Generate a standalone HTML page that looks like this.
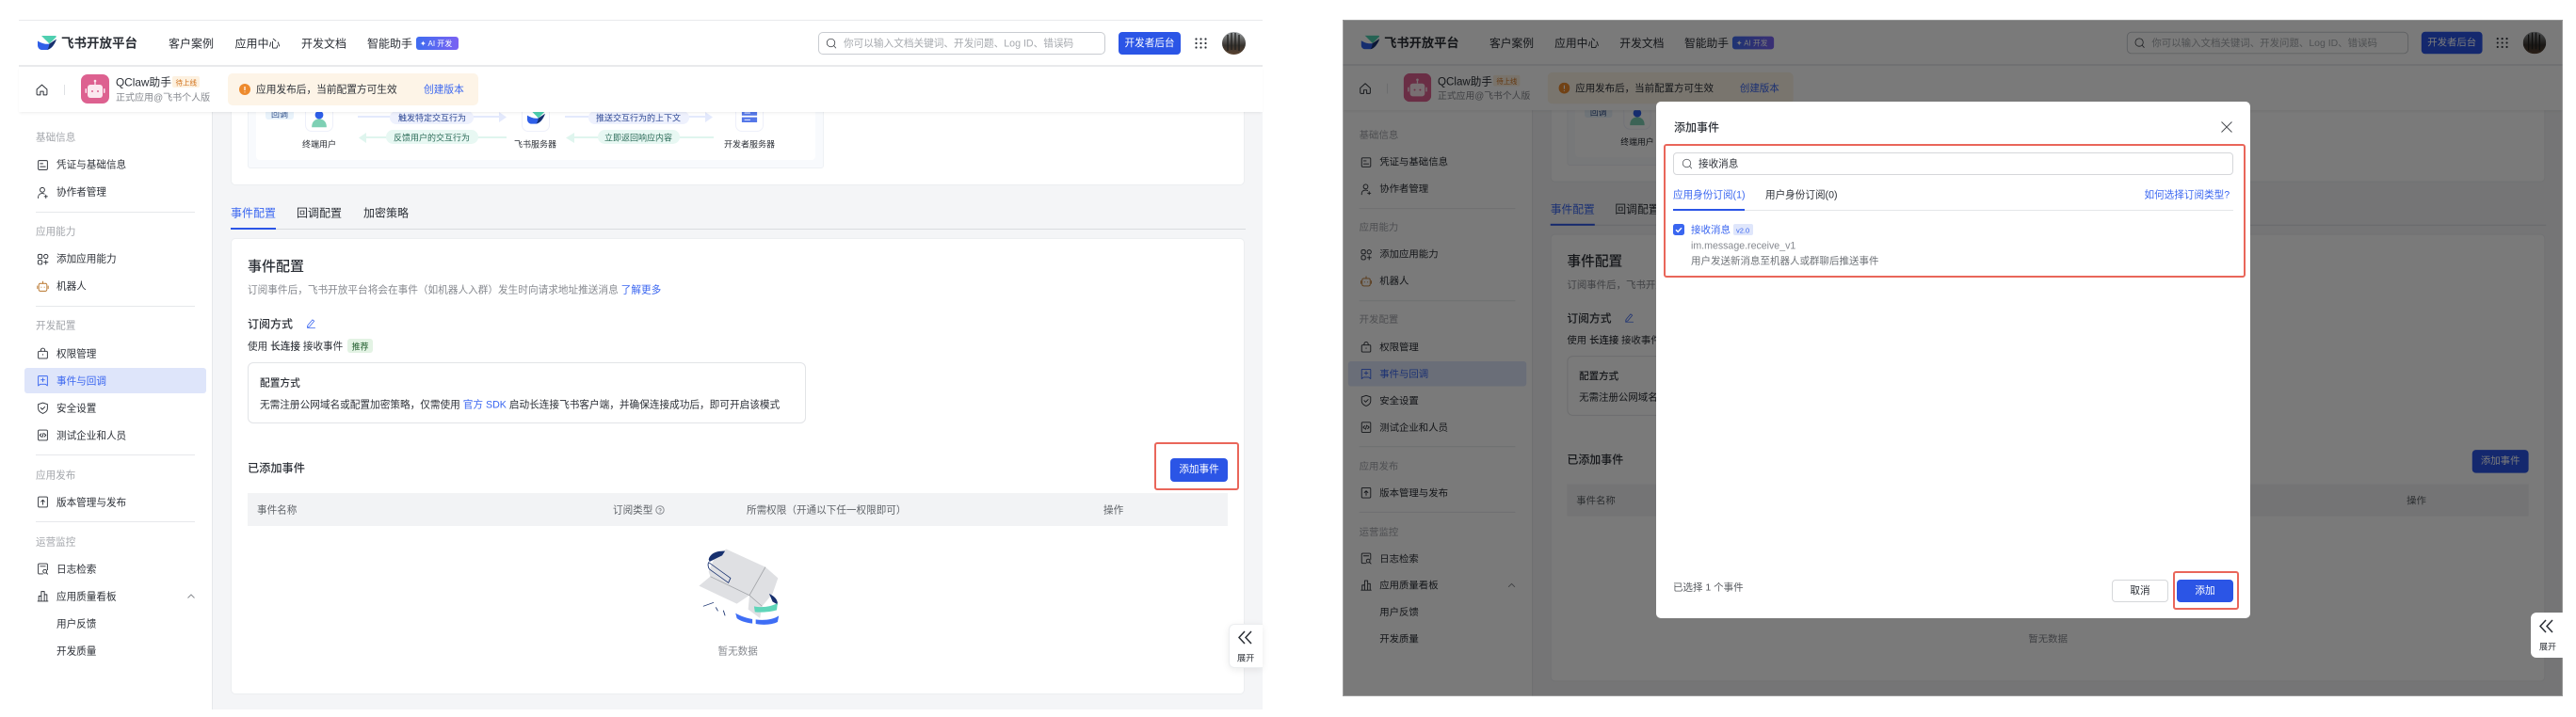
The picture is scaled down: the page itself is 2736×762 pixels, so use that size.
<!DOCTYPE html>
<html lang="zh-CN">
<head>
<meta charset="utf-8">
<title>飞书开放平台 事件配置</title>
<style>
html,body{margin:0;padding:0;width:2736px;height:762px;overflow:hidden;background:#fff}
body{position:relative;font-family:"Liberation Sans","Noto Sans CJK SC",sans-serif;color:#2b2f36;filter:blur(.35px)}
.p{position:absolute;left:0;top:0;width:1400px;height:762px;overflow:hidden}
.r{transform-origin:0 0;transform:translate(1406.38px,.4px) scale(.981)}
.b{position:absolute;box-sizing:border-box}
.t{position:absolute;white-space:nowrap;line-height:1.2;transform:translateY(calc(-50% + .8px));font-size:10.6px}
.g{color:#a3a6ab}
.h{color:#86898f}
.bl{color:#3a66f0}
.ic{position:absolute;width:13px;height:13px;fill:none;stroke:#2b2f36;stroke-width:1.7;stroke-linecap:round;stroke-linejoin:round}
.dv{position:absolute;left:38px;width:169px;height:1px;background:#e6e8eb}
.red{position:absolute;box-sizing:border-box;border:2px solid #e9665a;border-radius:3px}
.btn{position:absolute;background:#2b55e6;color:#fff;border-radius:4px;font-size:10.6px;text-align:center;box-sizing:border-box}
</style>
</head>
<body>
<svg width="0" height="0" style="position:absolute">
<defs>
<symbol id="doc" viewBox="0 0 24 24"><rect x="3" y="3" width="18" height="18" rx="2"/><path d="M7 9h5M7 15h10"/></symbol>
<symbol id="usr" viewBox="0 0 24 24"><circle cx="11" cy="7" r="4.5"/><path d="M3 23v-2c0-4 3-7 8-7 2 0 3 .4 4 1M18 17v6M15 20h6"/></symbol>
<symbol id="app" viewBox="0 0 24 24"><rect x="2.5" y="2.5" width="8" height="8" rx="2.5"/><rect x="14" y="2.5" width="8" height="8" rx="4"/><rect x="2.5" y="14" width="8" height="8" rx="2.5"/><path d="M18 14v8M14 18h8"/></symbol>
<symbol id="bot" viewBox="0 0 24 24"><rect x="4" y="6" width="16" height="15" rx="3"/><path d="M12 2v4M1.5 11v5M22.5 11v5M9 13v.5M15 13v.5"/></symbol>
<symbol id="bag" viewBox="0 0 24 24"><rect x="3" y="8" width="18" height="14" rx="2"/><path d="M8 8V6a4 4 0 0 1 8 0v2M12 14v1"/></symbol>
<symbol id="evt" viewBox="0 0 24 24"><path d="M4 3h16a1 1 0 0 1 1 1v18l-4-3H7l-4 3V4a1 1 0 0 1 1-1zM12 7v7M8.5 10.500h7"/></symbol>
<symbol id="shd" viewBox="0 0 24 24"><path d="M12 2l9 3v8c0 5-4 8-9 10-5-2-9-5-9-10V5zM8 12l3 3 5-5"/></symbol>
<symbol id="cod" viewBox="0 0 24 24"><rect x="3" y="2" width="18" height="20" rx="2"/><path d="M9 9l-3 3 3 3M15 9l3 3-3 3M13 8l-2 8"/></symbol>
<symbol id="upl" viewBox="0 0 24 24"><rect x="3" y="2" width="18" height="20" rx="2"/><path d="M12 17V8M8.500 11.500L12 8l3.500 3.500"/></symbol>
<symbol id="log" viewBox="0 0 24 24"><path d="M12 22H5a2 2 0 0 1-2-2V4a2 2 0 0 1 2-2h14a2 2 0 0 1 2 2v10M7 7h10"/><circle cx="16" cy="17" r="3.500"/><path d="M19 20l2.500 2.500"/></symbol>
<symbol id="bar" viewBox="0 0 24 24"><path d="M2 22h20M4 22V12h5v10M9 22V3h6v19M15 22V9h5v13"/></symbol>
<symbol id="pen" viewBox="0 0 24 24"><path d="M4 17L15 4l4 3L8 20l-5 1zM3 23h18"/></symbol>
<symbol id="sch" viewBox="0 0 24 24"><circle cx="11" cy="11" r="8.500"/><path d="M17 17l4.500 5"/></symbol>
<symbol id="hom" viewBox="0 0 24 24"><path d="M2 11L12 2l10 9v9a2 2 0 0 1-2 2h-5v-7H9v7H4a2 2 0 0 1-2-2z"/></symbol>
<symbol id="lgo" viewBox="0 0 40 30"><path d="M8 0H38C40 1 40 2 39 3L25 17C19 11 13 5 8 0Z" fill="#4fcfb0"/><path d="M0 11C7 15 15 19 25 17L33 21C29 26 25 29 20 30H8C3 29 0 25 0 20Z" fill="#2f5fe8"/><path d="M25 17L40 7C38 14 34 20 30 24 27 27 23 29 20 30 23 27 24 22 25 17Z" fill="#17306e"/></symbol>
<symbol id="rbt" viewBox="0 0 30 31"><rect width="30" height="31" rx="7" fill="#dd6190"/><rect x="7" y="11" width="16" height="14" rx="3" fill="#fbe8ef"/><path d="M15 7v4" stroke="#fbe8ef" stroke-width="1.300"/><circle cx="15" cy="7" r="1.300" fill="#fbe8ef"/><rect x="4.500" y="15" width="1.500" height="5" rx=".7" fill="#fbe8ef"/><rect x="24" y="15" width="1.500" height="5" rx=".7" fill="#fbe8ef"/><circle cx="12" cy="18" r="1" fill="#dd6190"/><circle cx="18" cy="18" r="1" fill="#dd6190"/></symbol>
<symbol id="ava" viewBox="0 0 25 24"><defs><linearGradient id="avg" x1="0" y1="0" x2="0" y2="1"><stop offset="0" stop-color="#9ba0a3"/><stop offset=".6" stop-color="#38332e"/><stop offset="1" stop-color="#5a4331"/></linearGradient></defs><ellipse cx="12.500" cy="12" rx="12.500" ry="12" fill="url(#avg)"/><path d="M6 3v17M10 1v18M14 1v18M18 3v17" stroke="#20201f" stroke-width="1.300"/></symbol>
<symbol id="dts" viewBox="0 0 13 12"><g fill="#2b2f36"><circle cx="1.500" cy="1.500" r="1.100"/><circle cx="6.500" cy="1.500" r="1.100"/><circle cx="11.500" cy="1.500" r="1.100"/><circle cx="1.500" cy="6" r="1.100"/><circle cx="6.500" cy="6" r="1.100"/><circle cx="11.500" cy="6" r="1.100"/><circle cx="1.500" cy="10.500" r="1.100"/><circle cx="6.500" cy="10.500" r="1.100"/><circle cx="11.500" cy="10.500" r="1.100"/></g></symbol>
<symbol id="prs" viewBox="0 0 20 24"><circle cx="10" cy="7" r="5" fill="#2f5fe8"/><path d="M1 22c0-7 4-10 9-10s9 3 9 10z" fill="#7ed0b4"/></symbol>
<symbol id="srv" viewBox="0 0 20 24"><rect x="1" y="1" width="18" height="5" fill="#7ed0b4"/><rect x="1" y="8" width="18" height="6" fill="#5577e8"/><rect x="1" y="16" width="18" height="6" fill="#5577e8"/><path d="M4 11h7M4 19h7" stroke="#fff"/></symbol>
</defs>
</svg>

<!-- LEFT PAGE -->
<div class="p">
<div class="b" style="left:20px;top:21px;width:1321px;height:733px;background:#f4f5f7"></div>
<!-- card 1 -->
<div class="b" style="left:245px;top:100px;width:1077px;height:97px;background:#fff;border:1px solid #eceef0;border-radius:5px"></div>
<div class="b" style="left:263px;top:100px;width:612px;height:79px;background:#f8fafd;border:1px solid #eef1f5;border-radius:3px"></div>
<div class="b" style="left:272px;top:100px;width:594px;height:70px;background:#fff;border-radius:4px"></div>
<div class="b" style="left:282px;top:115px;width:30px;height:12px;background:#e9f3fb;border-radius:3px"></div>
<span class="t" style="left:288px;top:121px;font-size:9px;color:#2f4f8a">回调</span>
<div class="b" style="left:324px;top:100px;width:30px;height:40px;background:#fff;border:1px solid #eef0fa;border-radius:7px"></div>
<svg style="position:absolute;left:329px;top:116px;width:20px;height:21px"><use href="#prs"/></svg>
<span class="t" style="left:321px;top:153px;font-size:9px">终端用户</span>
<div class="b" style="left:380px;top:123px;width:150px;height:2px;background:#e3e9fc"></div>
<svg style="position:absolute;left:530px;top:119px;width:8px;height:11px"><path d="M0 0l8 5.500-8 5.500z" fill="#e3e9fc"/></svg>
<div class="b" style="left:414px;top:118px;width:89px;height:14px;background:#eef1fd;border-radius:7px"></div>
<span class="t" style="left:423px;top:124.500px;font-size:9px;color:#2b4593">触发特定交互行为</span>
<div class="b" style="left:389px;top:145px;width:149px;height:2px;background:#dff5ee"></div>
<svg style="position:absolute;left:381px;top:140.500px;width:8px;height:11px"><path d="M8 0L0 5.500 8 11z" fill="#dff5ee"/></svg>
<div class="b" style="left:410px;top:138px;width:98px;height:15px;background:#e8f8f3;border-radius:8px"></div>
<span class="t" style="left:418px;top:145.500px;font-size:9px;color:#2b6b58">反馈用户的交互行为</span>
<div class="b" style="left:554px;top:100px;width:30px;height:40px;background:#fff;border:1px solid #eef0fa;border-radius:7px"></div>
<svg style="position:absolute;left:560px;top:117px;width:19px;height:15px"><use href="#lgo"/></svg>
<span class="t" style="left:546px;top:153px;font-size:9px">飞书服务器</span>
<div class="b" style="left:600px;top:123px;width:149px;height:2px;background:#e3e9fc"></div>
<svg style="position:absolute;left:749px;top:119px;width:8px;height:11px"><path d="M0 0l8 5.500-8 5.500z" fill="#e3e9fc"/></svg>
<div class="b" style="left:625px;top:118px;width:107px;height:14px;background:#eef1fd;border-radius:7px"></div>
<span class="t" style="left:633px;top:124.500px;font-size:9px;color:#2b4593">推送交互行为的上下文</span>
<div class="b" style="left:610px;top:145px;width:148px;height:2px;background:#dff5ee"></div>
<svg style="position:absolute;left:601px;top:140.500px;width:9px;height:11px"><path d="M9 0L0 5.500 9 11z" fill="#dff5ee"/></svg>
<div class="b" style="left:635px;top:138px;width:87px;height:15px;background:#e8f8f3;border-radius:8px"></div>
<span class="t" style="left:642px;top:145.500px;font-size:9px;color:#2b6b58">立即返回响应内容</span>
<div class="b" style="left:781px;top:100px;width:30px;height:40px;background:#fff;border:1px solid #eef0fa;border-radius:7px"></div>
<svg style="position:absolute;left:787px;top:110px;width:18px;height:22px"><use href="#srv"/></svg>
<span class="t" style="left:769px;top:153px;font-size:9px">开发者服务器</span>
<!-- tabs -->
<div class="b" style="left:245px;top:243px;width:1078px;height:1px;background:#d9dce0"></div>
<div class="b" style="left:245px;top:242px;width:48px;height:2px;background:#2b55e6"></div>
<span class="t" style="left:245px;top:225.500px;font-size:12px;color:#3a66f0">事件配置</span>
<span class="t" style="left:315px;top:225.500px;font-size:12px">回调配置</span>
<span class="t" style="left:386px;top:225.500px;font-size:12px">加密策略</span>
<!-- card 2 -->
<div class="b" style="left:245px;top:253px;width:1077px;height:485px;background:#fff;border:1px solid #eceef0;border-radius:5px"></div>
<span class="t" style="left:263px;top:283px;font-size:15px;font-weight:500">事件配置</span>
<span class="t h" style="left:263px;top:308px;font-size:10.650px">订阅事件后，飞书开放平台将会在事件（如机器人入群）发生时向请求地址推送消息 <span class="bl">了解更多</span></span>
<span class="t" style="left:263px;top:344px;font-size:12px;font-weight:500">订阅方式</span>
<svg class="ic" style="left:325px;top:338px;width:11px;height:11px;stroke:#3a66f0"><use href="#pen"/></svg>
<span class="t" style="left:263px;top:368px;font-size:10.600px">使用 <b style="font-weight:500">长连接</b> 接收事件</span>
<div class="b" style="left:369px;top:360px;width:27px;height:15px;background:#e3f3e4;border-radius:3px"></div>
<span class="t" style="left:373.500px;top:367.500px;font-size:9px;color:#1d5a2a">推荐</span>
<div class="b" style="left:263px;top:385px;width:593px;height:65px;border:1px solid #e2e4e7;border-radius:6px;background:#fff"></div>
<span class="t" style="left:276px;top:407px;font-size:10.700px;font-weight:500">配置方式</span>
<span class="t" style="left:276px;top:430px;font-size:10.650px">无需注册公网域名或配置加密策略，仅需使用 <span class="bl">官方 SDK</span> 启动长连接飞书客户端，并确保连接成功后，即可开启该模式</span>
<span class="t" style="left:263px;top:497px;font-size:12.200px;font-weight:500">已添加事件</span>
<div class="btn" style="left:1243px;top:487px;width:61px;height:25px;line-height:25px">添加事件</div>
<div class="red" style="left:1226px;top:470px;width:90px;height:51px"></div>
<div class="b" style="left:263px;top:524px;width:1041px;height:35px;background:#f2f3f5"></div>
<span class="t" style="left:273px;top:542px;color:#5f6368">事件名称</span>
<span class="t" style="left:651px;top:542px;color:#5f6368">订阅类型</span>
<svg class="ic" style="left:696px;top:537px;width:10px;height:10px;stroke:#8a8d92"><circle cx="5" cy="5" r="4.200" stroke-width="1"/><path d="M5 7.500v.1M3.800 4a1.300 1.300 0 1 1 1.200 2" stroke-width="1"/></svg>
<span class="t" style="left:793px;top:542px;color:#5f6368">所需权限（开通以下任一权限即可）</span>
<span class="t" style="left:1172px;top:542px;color:#5f6368">操作</span>
<!-- empty illustration -->
<svg style="position:absolute;left:700px;top:381px;width:700px;height:381px" viewBox="0 0 1568 1143" preserveAspectRatio="none">
<path d="M182 812C195 822 208 828 222 831L222 845C205 842 192 836 185 828Z" fill="#3f6ef5"/>
<path d="M230 832C250 836 272 832 285 820L282 840C270 848 250 851 230 846Z" fill="#3f6ef5"/>
<path d="M160 608L253 665 283 700 270 750 245 790 240 828 212 800 215 755 185 782 95 725 122 695 118 680 135 625Z" fill="#dfe0e3"/>
<path d="M253 665L215 755M122 695L215 755 245 790" stroke="#a2a4a8" stroke-width="2" fill="none"/>
<path d="M118 640C122 620 140 612 157 614L150 628 120 648Z" fill="#17306e"/>
<path d="M118 650L170 700 165 715 120 672C116 665 116 655 118 650Z" fill="none" stroke="#17306e" stroke-width="2"/>
<path d="M262 750C275 758 283 770 282 785L270 775Z" fill="#17306e"/>
<path d="M226 790C245 795 265 792 282 780L280 802C265 808 245 810 228 808Z" fill="#5fd5b9"/>
<path d="M105 790L130 778M135 793L140 805M153 803L157 820" stroke="#17306e" stroke-width="2" fill="none"/>
</svg>
<span class="t h" style="left:762.500px;top:692px">暂无数据</span>
<!-- expand tab -->
<div class="b" style="left:1305px;top:663px;width:36px;height:47px;background:#fff;border:1px solid #eceef0;border-right:0;border-radius:6px 0 0 6px;box-shadow:0 2px 8px rgba(0,0,0,.08)"></div>
<svg style="position:absolute;left:1315px;top:670px;width:16px;height:15px"><path d="M7 1L1 7.500 7 14M14 1L8 7.500 14 14" fill="none" stroke="#2b2f36" stroke-width="1.500"/></svg>
<span class="t" style="left:1314px;top:699px;font-size:9.200px">展开</span>
<!-- sidebar -->
<div class="b" style="left:20px;top:70px;width:206px;height:684px;background:#fff;border-right:1px solid #e6e8eb"></div>
<span class="t g" style="left:38px;top:146px">基础信息</span>
<svg class="ic" style="left:39px;top:169px"><use href="#doc"/></svg><span class="t" style="left:60px;top:175px">凭证与基础信息</span>
<svg class="ic" style="left:39px;top:198px"><use href="#usr"/></svg><span class="t" style="left:60px;top:204px">协作者管理</span>
<div class="dv" style="top:225px"></div>
<span class="t g" style="left:38px;top:246px">应用能力</span>
<svg class="ic" style="left:39px;top:269px"><use href="#app"/></svg><span class="t" style="left:60px;top:275px">添加应用能力</span>
<svg class="ic" style="left:39px;top:298px;stroke:#b8742a"><use href="#bot"/></svg><span class="t" style="left:60px;top:304px">机器人</span>
<div class="dv" style="top:325px"></div>
<span class="t g" style="left:38px;top:346px">开发配置</span>
<svg class="ic" style="left:39px;top:369px"><use href="#bag"/></svg><span class="t" style="left:60px;top:375.500px">权限管理</span>
<div class="b" style="left:26px;top:391px;width:193px;height:27px;background:#dee5fa;border-radius:3px"></div>
<svg class="ic" style="left:39px;top:398px;stroke:#3a66f0"><use href="#evt"/></svg><span class="t bl" style="left:60px;top:404.500px">事件与回调</span>
<svg class="ic" style="left:39px;top:427px"><use href="#shd"/></svg><span class="t" style="left:60px;top:433.500px">安全设置</span>
<svg class="ic" style="left:39px;top:456px"><use href="#cod"/></svg><span class="t" style="left:60px;top:462.500px">测试企业和人员</span>
<div class="dv" style="top:483px"></div>
<span class="t g" style="left:38px;top:505px">应用发布</span>
<svg class="ic" style="left:39px;top:527px"><use href="#upl"/></svg><span class="t" style="left:60px;top:534px">版本管理与发布</span>
<div class="dv" style="top:554px"></div>
<span class="t g" style="left:38px;top:576px">运营监控</span>
<svg class="ic" style="left:39px;top:598px"><use href="#log"/></svg><span class="t" style="left:60px;top:605px">日志检索</span>
<svg class="ic" style="left:39px;top:627px"><use href="#bar"/></svg><span class="t" style="left:60px;top:634px">应用质量看板</span>
<svg style="position:absolute;left:199px;top:631px;width:8px;height:5px"><path d="M.5 4.500L4 1l3.500 3.500" fill="none" stroke="#8a8d92"/></svg>
<span class="t" style="left:60px;top:663px">用户反馈</span>
<span class="t" style="left:60px;top:692px">开发质量</span>
<!-- subheader -->
<div class="b" style="left:20px;top:70px;width:1321px;height:49px;background:#fff;border-top:1px solid #e9eaec;box-shadow:0 2px 3px -1px rgba(0,0,0,.08)"></div>
<svg class="ic" style="left:38px;top:89px;stroke-width:1.800"><use href="#hom"/></svg>
<div class="b" style="left:68px;top:90px;width:1px;height:11px;background:#dfe1e4"></div>
<svg style="position:absolute;left:86px;top:79px;width:30px;height:31px"><use href="#rbt"/></svg>
<span class="t" style="left:123px;top:87px;font-size:11.800px">QClaw助手</span>
<div class="b" style="left:183px;top:81px;width:29px;height:12px;background:#fdf1e0;border-radius:2px"></div>
<span class="t" style="left:186.500px;top:87px;font-size:7.500px;color:#d0701a">待上线</span>
<span class="t h" style="left:123px;top:104px;font-size:10px">正式应用@飞书个人版</span>
<div class="b" style="left:242px;top:78px;width:266px;height:34px;background:#fdf4e7;border-radius:5px"></div>
<svg style="position:absolute;left:254px;top:89px;width:12px;height:12px"><circle cx="6" cy="6" r="6" fill="#ed8a2d"/><path d="M6 3v4M6 8.500v.8" stroke="#fff" stroke-width="1.200"/></svg>
<span class="t" style="left:272px;top:95px;font-size:10.700px">应用发布后，当前配置方可生效</span>
<span class="t bl" style="left:450px;top:95px;font-size:10.700px">创建版本</span>
<!-- header -->
<div class="b" style="left:20px;top:21px;width:1321px;height:49px;background:#fff;border-top:1px solid #e9eaec;border-bottom:1px solid #e9eaec"></div>
<svg style="position:absolute;left:40px;top:38px;width:20px;height:15px"><use href="#lgo"/></svg>
<span class="t" style="left:65px;top:46px;font-size:13.500px;font-weight:700">飞书开放平台</span>
<span class="t" style="left:179px;top:46px;font-size:12px">客户案例</span>
<span class="t" style="left:249.500px;top:46px;font-size:12px">应用中心</span>
<span class="t" style="left:320px;top:46px;font-size:12px">开发文档</span>
<span class="t" style="left:390px;top:46px;font-size:12px">智能助手</span>
<div class="b" style="left:442px;top:39px;width:45px;height:14px;background:linear-gradient(90deg,#3f6df0,#7a62f2);border-radius:3px"></div>
<span class="t" style="left:446px;top:46px;font-size:8px;color:#fff">✦ AI 开发</span>
<div class="b" style="left:869px;top:34px;width:305px;height:24px;border:1px solid #c9ccd1;border-radius:5px;background:#fff"></div>
<svg class="ic" style="left:877px;top:40px;width:12px;height:12px;stroke:#3d4046;stroke-width:1.600"><use href="#sch"/></svg>
<span class="t" style="left:896px;top:46px;font-size:10.650px;color:#a6a9ae">你可以输入文档关键词、开发问题、Log ID、错误码</span>
<div class="btn" style="left:1188px;top:34px;width:66px;height:24px;line-height:24px">开发者后台</div>
<svg style="position:absolute;left:1269px;top:40px;width:13px;height:12px"><use href="#dts"/></svg>
<svg style="position:absolute;left:1298px;top:34px;width:25px;height:24px"><use href="#ava"/></svg>
</div>

<!-- RIGHT PAGE -->
<div class="p r">
<div class="b" style="left:20px;top:21px;width:1321px;height:733px;background:#f4f5f7"></div>
<div class="b" style="left:245px;top:100px;width:1077px;height:97px;background:#fff;border:1px solid #eceef0;border-radius:5px"></div>
<div class="b" style="left:263px;top:100px;width:612px;height:79px;background:#f8fafd;border:1px solid #eef1f5;border-radius:3px"></div>
<div class="b" style="left:272px;top:100px;width:594px;height:70px;background:#fff;border-radius:4px"></div>
<div class="b" style="left:282px;top:115px;width:30px;height:12px;background:#e9f3fb;border-radius:3px"></div>
<span class="t" style="left:288px;top:121px;font-size:9px;color:#2f4f8a">回调</span>
<div class="b" style="left:324px;top:100px;width:30px;height:40px;background:#fff;border:1px solid #eef0fa;border-radius:7px"></div>
<svg style="position:absolute;left:329px;top:116px;width:20px;height:21px"><use href="#prs"/></svg>
<span class="t" style="left:321px;top:153px;font-size:9px">终端用户</span>
<div class="b" style="left:245px;top:243px;width:1078px;height:1px;background:#d9dce0"></div>
<div class="b" style="left:245px;top:242px;width:48px;height:2px;background:#2b55e6"></div>
<span class="t" style="left:245px;top:225.500px;font-size:12px;color:#3a66f0">事件配置</span>
<span class="t" style="left:315px;top:225.500px;font-size:12px">回调配置</span>
<div class="b" style="left:245px;top:253px;width:1077px;height:485px;background:#fff;border:1px solid #eceef0;border-radius:5px"></div>
<span class="t" style="left:263px;top:283px;font-size:15px;font-weight:500">事件配置</span>
<span class="t h" style="left:263px;top:308px;font-size:10.650px">订阅事件后，飞书开放平台将会在事件</span>
<span class="t" style="left:263px;top:344px;font-size:12px;font-weight:500">订阅方式</span>
<svg class="ic" style="left:325px;top:338px;width:11px;height:11px;stroke:#3a66f0"><use href="#pen"/></svg>
<span class="t" style="left:263px;top:368px;font-size:10.600px">使用 <b style="font-weight:500">长连接</b> 接收事件</span>
<div class="b" style="left:263px;top:385px;width:593px;height:65px;border:1px solid #e2e4e7;border-radius:6px;background:#fff"></div>
<span class="t" style="left:276px;top:407px;font-size:10.700px;font-weight:500">配置方式</span>
<span class="t" style="left:276px;top:430px;font-size:10.650px">无需注册公网域名或配置加密策略</span>
<span class="t" style="left:263px;top:497px;font-size:12.200px;font-weight:500">已添加事件</span>
<div class="btn" style="left:1243px;top:487px;width:61px;height:25px;line-height:25px">添加事件</div>
<div class="b" style="left:263px;top:524px;width:1041px;height:35px;background:#f2f3f5"></div>
<span class="t" style="left:273px;top:542px;color:#5f6368">事件名称</span>
<span class="t" style="left:1172px;top:542px;color:#5f6368">操作</span>
<span class="t h" style="left:762.500px;top:692px">暂无数据</span>
<div class="b" style="left:20px;top:70px;width:206px;height:684px;background:#fff;border-right:1px solid #e6e8eb"></div>
<span class="t g" style="left:38px;top:146px">基础信息</span>
<svg class="ic" style="left:39px;top:169px"><use href="#doc"/></svg><span class="t" style="left:60px;top:175px">凭证与基础信息</span>
<svg class="ic" style="left:39px;top:198px"><use href="#usr"/></svg><span class="t" style="left:60px;top:204px">协作者管理</span>
<div class="dv" style="top:225px"></div>
<span class="t g" style="left:38px;top:246px">应用能力</span>
<svg class="ic" style="left:39px;top:269px"><use href="#app"/></svg><span class="t" style="left:60px;top:275px">添加应用能力</span>
<svg class="ic" style="left:39px;top:298px;stroke:#b8742a"><use href="#bot"/></svg><span class="t" style="left:60px;top:304px">机器人</span>
<div class="dv" style="top:325px"></div>
<span class="t g" style="left:38px;top:346px">开发配置</span>
<svg class="ic" style="left:39px;top:369px"><use href="#bag"/></svg><span class="t" style="left:60px;top:375.500px">权限管理</span>
<div class="b" style="left:26px;top:391px;width:193px;height:27px;background:#dee5fa;border-radius:3px"></div>
<svg class="ic" style="left:39px;top:398px;stroke:#3a66f0"><use href="#evt"/></svg><span class="t bl" style="left:60px;top:404.500px">事件与回调</span>
<svg class="ic" style="left:39px;top:427px"><use href="#shd"/></svg><span class="t" style="left:60px;top:433.500px">安全设置</span>
<svg class="ic" style="left:39px;top:456px"><use href="#cod"/></svg><span class="t" style="left:60px;top:462.500px">测试企业和人员</span>
<div class="dv" style="top:483px"></div>
<span class="t g" style="left:38px;top:505px">应用发布</span>
<svg class="ic" style="left:39px;top:527px"><use href="#upl"/></svg><span class="t" style="left:60px;top:534px">版本管理与发布</span>
<div class="dv" style="top:554px"></div>
<span class="t g" style="left:38px;top:576px">运营监控</span>
<svg class="ic" style="left:39px;top:598px"><use href="#log"/></svg><span class="t" style="left:60px;top:605px">日志检索</span>
<svg class="ic" style="left:39px;top:627px"><use href="#bar"/></svg><span class="t" style="left:60px;top:634px">应用质量看板</span>
<svg style="position:absolute;left:199px;top:631px;width:8px;height:5px"><path d="M.5 4.500L4 1l3.500 3.500" fill="none" stroke="#8a8d92"/></svg>
<span class="t" style="left:60px;top:663px">用户反馈</span>
<span class="t" style="left:60px;top:692px">开发质量</span>
<div class="b" style="left:20px;top:70px;width:1321px;height:49px;background:#fff;border-top:1px solid #e9eaec;box-shadow:0 2px 3px -1px rgba(0,0,0,.08)"></div>
<svg class="ic" style="left:38px;top:89px;stroke-width:1.800"><use href="#hom"/></svg>
<div class="b" style="left:68px;top:90px;width:1px;height:11px;background:#dfe1e4"></div>
<svg style="position:absolute;left:86px;top:79px;width:30px;height:31px"><use href="#rbt"/></svg>
<span class="t" style="left:123px;top:87px;font-size:11.800px">QClaw助手</span>
<div class="b" style="left:183px;top:81px;width:29px;height:12px;background:#fdf1e0;border-radius:2px"></div>
<span class="t" style="left:186.500px;top:87px;font-size:7.500px;color:#d0701a">待上线</span>
<span class="t h" style="left:123px;top:104px;font-size:10px">正式应用@飞书个人版</span>
<div class="b" style="left:242px;top:78px;width:266px;height:34px;background:#fdf4e7;border-radius:5px"></div>
<svg style="position:absolute;left:254px;top:89px;width:12px;height:12px"><circle cx="6" cy="6" r="6" fill="#ed8a2d"/><path d="M6 3v4M6 8.500v.8" stroke="#fff" stroke-width="1.200"/></svg>
<span class="t" style="left:272px;top:95px;font-size:10.700px">应用发布后，当前配置方可生效</span>
<span class="t bl" style="left:450px;top:95px;font-size:10.700px">创建版本</span>
<div class="b" style="left:20px;top:21px;width:1321px;height:49px;background:#fff;border-top:1px solid #e9eaec;border-bottom:1px solid #e9eaec"></div>
<svg style="position:absolute;left:40px;top:38px;width:20px;height:15px"><use href="#lgo"/></svg>
<span class="t" style="left:65px;top:46px;font-size:13.500px;font-weight:700">飞书开放平台</span>
<span class="t" style="left:179px;top:46px;font-size:12px">客户案例</span>
<span class="t" style="left:249.500px;top:46px;font-size:12px">应用中心</span>
<span class="t" style="left:320px;top:46px;font-size:12px">开发文档</span>
<span class="t" style="left:390px;top:46px;font-size:12px">智能助手</span>
<div class="b" style="left:442px;top:39px;width:45px;height:14px;background:linear-gradient(90deg,#3f6df0,#7a62f2);border-radius:3px"></div>
<span class="t" style="left:446px;top:46px;font-size:8px;color:#fff">✦ AI 开发</span>
<div class="b" style="left:869px;top:34px;width:305px;height:24px;border:1px solid #c9ccd1;border-radius:5px;background:#fff"></div>
<svg class="ic" style="left:877px;top:40px;width:12px;height:12px;stroke:#3d4046;stroke-width:1.600"><use href="#sch"/></svg>
<span class="t" style="left:896px;top:46px;font-size:10.650px;color:#a6a9ae">你可以输入文档关键词、开发问题、Log ID、错误码</span>
<div class="btn" style="left:1188px;top:34px;width:66px;height:24px;line-height:24px">开发者后台</div>
<svg style="position:absolute;left:1269px;top:40px;width:13px;height:12px"><use href="#dts"/></svg>
<svg style="position:absolute;left:1298px;top:34px;width:25px;height:24px"><use href="#ava"/></svg>
</div>

<!-- overlay -->
<div class="b" style="left:1426px;top:21px;width:1296px;height:719px;background:rgba(0,0,0,.52);border:1px solid rgba(255,255,255,.25)"></div>
<!-- expand tab over overlay -->
<div class="b" style="left:2688px;top:651px;width:34px;height:48px;background:#fff;border-radius:6px 0 0 6px"></div>
<svg style="position:absolute;left:2697px;top:658px;width:16px;height:15px"><path d="M7 1L1 7.500 7 14M14 1L8 7.500 14 14" fill="none" stroke="#2b2f36" stroke-width="1.500"/></svg>
<span class="t" style="left:2697px;top:687px;font-size:9px">展开</span>

<!-- modal -->
<div class="b" style="left:1759px;top:108px;width:631px;height:549px;background:#fff;border-radius:5px"></div>
<span class="t" style="left:1778px;top:135px;font-size:12px;font-weight:500">添加事件</span>
<svg style="position:absolute;left:2359px;top:129px;width:12px;height:12px"><path d="M.5.500l11 11M11.500.500l-11 11" stroke="#4a4d52" stroke-width="1"/></svg>
<div class="red" style="left:1767px;top:153px;width:618px;height:142px"></div>
<div class="b" style="left:1777px;top:162px;width:595px;height:24px;border:1px solid #d5d7da;border-radius:4px"></div>
<svg class="ic" style="left:1786px;top:168px;width:12px;height:12px;stroke:#4a4d52;stroke-width:1.500"><use href="#sch"/></svg>
<span class="t" style="left:1804px;top:174px;font-size:10.600px">接收消息</span>
<span class="t bl" style="left:1777px;top:206.500px;font-size:10.600px">应用身份订阅(1)</span>
<span class="t" style="left:1875px;top:206.500px;font-size:10.600px">用户身份订阅(0)</span>
<span class="t bl" style="left:2277.500px;top:206.500px;font-size:10.600px">如何选择订阅类型?</span>
<div class="b" style="left:1777px;top:223px;width:595px;height:1px;background:#e4e6e9"></div>
<div class="b" style="left:1777px;top:221.500px;width:76px;height:2px;background:#2b55e6"></div>
<svg style="position:absolute;left:1777px;top:238px;width:12px;height:12px"><rect width="12" height="12" rx="2.500" fill="#3a66f0"/><path d="M3 6.200l2.200 2.200L9 4.200" fill="none" stroke="#fff" stroke-width="1.400"/></svg>
<span class="t bl" style="left:1796px;top:244px;font-size:10.500px">接收消息</span>
<div class="b" style="left:1841px;top:238px;width:21px;height:12px;background:#dfe6fb;border-radius:2px"></div>
<span class="t" style="left:1844px;top:244px;font-size:7.500px;color:#3a66f0">v2.0</span>
<span class="t h" style="left:1796px;top:260.500px;font-size:10.600px">im.message.receive_v1</span>
<span class="t" style="left:1796px;top:277px;font-size:10.500px;color:#6e7277">用户发送新消息至机器人或群聊后推送事件</span>
<span class="t" style="left:1777px;top:624px;font-size:10.500px;color:#55585d">已选择 1 个事件</span>
<div class="b" style="left:2243px;top:616px;width:60px;height:24px;border:1px solid #d5d7da;border-radius:4px;background:#fff;font-size:10.600px;text-align:center;line-height:22px">取消</div>
<div class="btn" style="left:2312px;top:616px;width:60px;height:24px;line-height:24px">添加</div>
<div class="red" style="left:2308px;top:607px;width:70px;height:41px"></div>
</body>
</html>
